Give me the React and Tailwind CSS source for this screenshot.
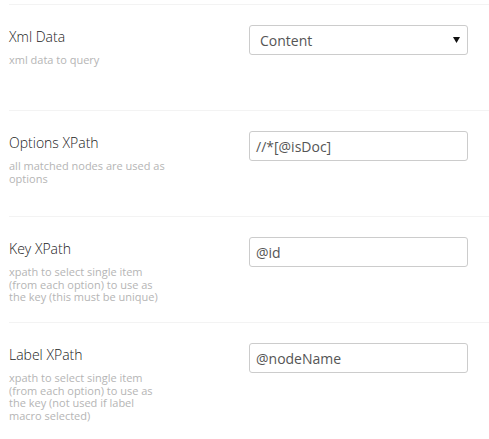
import React from "react";

const rows = [
  { label: "Xml Data", desc: "xml data to query", kind: "select", value: "Content" },
  { label: "Options XPath", desc: "all matched nodes are used as options", value: "//*[@isDoc]" },
  { label: "Key XPath", desc: "xpath to select single item (from each option) to use as the key (this must be unique)", value: "@id" },
  { label: "Label XPath", desc: "xpath to select single item (from each option) to use as the key (not used if label macro selected)", value: "@nodeName" },
];

export default function App() {
  return (
    <div
      className="w-[489px] h-[439px] bg-white overflow-hidden pt-[4px] pl-[9px]"
      style={{ fontFamily: '"Open Sans", sans-serif' }}
    >
      {rows.map((r, i) => (
        <div key={i} className="h-[106px] border-t border-[#f3f3f3] pt-[20px] flex">
          <div className="w-[240px] shrink-0 pt-[2px]">
            <div className="text-[14px] leading-[20px] font-light text-[#222222]">{r.label}</div>
            <div className="mt-[7px] w-[160px] text-[11px] leading-[12.5px] text-[#b5b5b5]">{r.desc}</div>
          </div>
          {r.kind === "select" ? (
            <div className="w-[219px] h-[30px] border border-[#cccccc] rounded-[3px] flex items-center justify-between pl-[10px] pr-[7px]">
              <span className="text-[14px] text-[#555555]">{r.value}</span>
              <svg width="7" height="6" viewBox="0 0 7 6"><path d="M0 0 H7 L3.5 6 Z" fill="#111" /></svg>
            </div>
          ) : (
            <div className="w-[219px] h-[30px] border border-[#cccccc] rounded-[3px] flex items-center pl-[6px]">
              <span className="text-[14px] text-[#555555]">{r.value}</span>
            </div>
          )}
        </div>
      ))}
    </div>
  );
}
